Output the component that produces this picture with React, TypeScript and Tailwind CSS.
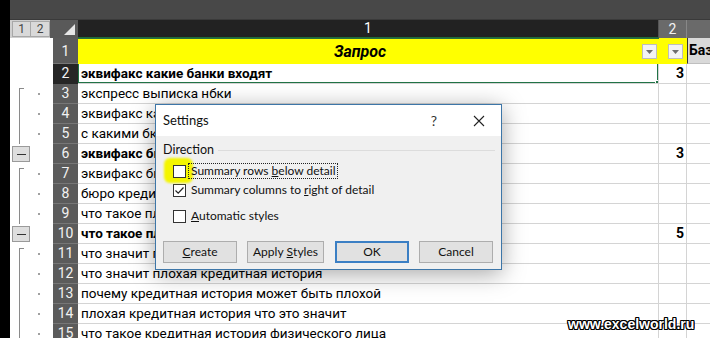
import React from 'react'

type Row = {
  n: number
  text: string
  bold?: boolean
  v?: string
  outline?: 'start' | 'line' | 'minus'
  dot?: boolean
}

const rows: Row[] = [
  { n: 2, text: 'эквифакс какие банки входят', bold: true, v: '3' },
  { n: 3, text: 'экспресс выписка нбки', outline: 'start', dot: true },
  { n: 4, text: 'эквифакс какие банки сотрудничают', outline: 'line', dot: true },
  { n: 5, text: 'с какими бки работают банки', outline: 'line', dot: true },
  { n: 6, text: 'эквифакс бки официальный сайт', bold: true, v: '3', outline: 'minus' },
  { n: 7, text: 'эквифакс бки официальный сайт вход', outline: 'start', dot: true },
  { n: 8, text: 'бюро кредитных историй эквифакс', outline: 'line', dot: true },
  { n: 9, text: 'что такое плохая кредитная история', outline: 'line', dot: true },
  { n: 10, text: 'что такое плохая кредитная история', bold: true, v: '5', outline: 'minus' },
  { n: 11, text: 'что значит плохая кредитная история в банке', outline: 'start', dot: true },
  { n: 12, text: 'что значит плохая кредитная история', outline: 'line', dot: true },
  { n: 13, text: 'почему кредитная история может быть плохой', outline: 'line', dot: true },
  { n: 14, text: 'плохая кредитная история что это значит', outline: 'line', dot: true },
  { n: 15, text: 'что такое кредитная история физического лица', outline: 'line', dot: true },
]

const cellFont = "font-['Roboto','Noto_Sans',sans-serif]"
const uiFont = "font-['Lato','Noto_Sans',sans-serif]"

function Minus() {
  return (
    <div className="ml-[2px] w-[18px] h-[16px] bg-[#dedede] border border-[#9a9a9a] flex items-center justify-center">
      <div className="w-[9px] h-px bg-[#333]" />
    </div>
  )
}

function Outline({ row }: { row: Row }) {
  return (
    <div className="w-[43px] shrink-0 h-full bg-white flex">
      <div className="w-[21px] shrink-0 h-full flex items-stretch">
        {row.outline === 'start' && <div className="ml-[9px] mt-[4px] w-[5px] border-l border-t border-[#8a8a8a]" />}
        {row.outline === 'line' && <div className="ml-[9px] w-[5px] border-l border-[#8a8a8a]" />}
        {row.outline === 'minus' && <div className="flex items-center"><Minus /></div>}
      </div>
      <div className="w-[22px] shrink-0 flex items-center">
        {row.dot && <div className="ml-[7px] w-[2px] h-[2px] bg-[#a0a0a0]" />}
      </div>
    </div>
  )
}

function Check({ checked }: { checked?: boolean }) {
  return (
    <div className="w-[13px] h-[13px] shrink-0 bg-white border border-[#333] flex items-center justify-center">
      {checked && (
        <svg width="11" height="11" viewBox="0 0 11 11">
          <path d="M1.5 5.5 L4.2 8.2 L9.5 2.5" fill="none" stroke="#222" strokeWidth="1.2" />
        </svg>
      )}
    </div>
  )
}

function FilterBtn() {
  return (
    <div className="w-[15px] h-[15px] bg-[#f3f3f3] border border-[#bdbdbd] flex items-center justify-center">
      <svg width="7" height="4" viewBox="0 0 7 4">
        <path d="M0 0 H7 L3.5 4 Z" fill="#6d6d6d" />
      </svg>
    </div>
  )
}

function Btn({ children, w, ml, focus }: { children: React.ReactNode; w: string; ml: string; focus?: boolean }) {
  return (
    <div
      className={
        'h-[22px] shrink-0 flex items-center justify-center bg-[#e1e1e1] text-[12px] text-[#111] ' +
        w + ' ' + ml + ' ' +
        (focus ? 'border-2 border-[#3b7fc4]' : 'border border-[#adadad]')
      }
    >
      {children}
    </div>
  )
}

function Dialog() {
  return (
    <div className={`absolute left-[155px] top-[104px] w-[347px] h-[166px] border border-[#3d76a8] bg-[#f0f0f0] shadow-[0_4px_22px_rgba(0,0,0,0.35)] flex flex-col ${uiFont}`}>
      <div className="h-[31px] shrink-0 bg-white flex items-center text-[13px] text-[#111]">
        <span className="ml-[7px]">Settings</span>
        <span className="ml-auto mr-[36px] text-[14px] text-[#333]">?</span>
        <svg className="mr-[16px]" width="12" height="12" viewBox="0 0 12 12">
          <path d="M1 1 L11 11 M11 1 L1 11" stroke="#222" strokeWidth="1.1" />
        </svg>
      </div>
      <div className="flex-1 flex flex-col text-[12px] text-[#111] pl-[7px]">
        <div className="mt-[6px] h-[16px] flex items-center">
          <span className="text-[12.5px]">Direction</span>
          <div className="flex-1 ml-[4px] mr-[6px] h-px bg-[#dcdcdc]" />
        </div>
        <div className="mt-[4px] h-[18px] flex items-center pl-[10px] relative">
          <div className="absolute left-[1px] top-[-4px] w-[29px] h-[25px] rounded-[6px] bg-[#f4f500] blur-[1px]" />
          <div className="relative"><Check /></div>
          <span className="relative ml-[2px] px-[2px] border border-dotted border-[#222] leading-[14px]">
            Summary rows <u>b</u>elow detail
          </span>
        </div>
        <div className="mt-[1px] h-[18px] flex items-center pl-[10px]">
          <Check checked />
          <span className="ml-[5px]">Summary columns to <u>r</u>ight of detail</span>
        </div>
        <div className="mt-[8px] h-[18px] flex items-center pl-[10px]">
          <Check />
          <span className="ml-[5px]"><u>A</u>utomatic styles</span>
        </div>
        <div className="mt-[16px] flex">
          <Btn w="w-[74px]" ml="ml-0"><u>C</u>reate</Btn>
          <Btn w="w-[77px]" ml="ml-[10px]">Apply <u className="ml-[3px]">S</u>tyles</Btn>
          <Btn w="w-[74px]" ml="ml-[11px]" focus>OK</Btn>
          <Btn w="w-[74px]" ml="ml-[10px]">Cancel</Btn>
        </div>
      </div>
    </div>
  )
}

export default function App() {
  return (
    <div className={`relative w-[710px] h-[338px] overflow-hidden bg-white flex ${cellFont}`}>
      <div className="w-[10px] shrink-0 h-full bg-black" />
      <div className="flex-1 min-w-0 flex flex-col">
        <div className="h-[20px] shrink-0 bg-[#484848] border-b border-[#3a3a3a]" />

        {/* column headers */}
        <div className="h-[18px] shrink-0 flex">
          <div className="w-[43px] shrink-0 bg-[#cfcfcf] flex items-center">
            <div className="ml-[2px] w-[19px] h-[16px] bg-[#d9d9d9] border border-[#a8a8a8] flex items-center justify-center text-[12px] text-[#444]">1</div>
            <div className="w-[19px] h-[16px] bg-[#d9d9d9] border border-[#a8a8a8] border-l-0 flex items-center justify-center text-[12px] text-[#444]">2</div>
            <div className="flex-1 h-full bg-[#595959]" />
          </div>
          <div className="w-[25px] shrink-0 bg-[#595959] flex items-end justify-end pr-[3px] pb-[3px]">
            <svg width="11" height="11" viewBox="0 0 11 11">
              <path d="M11 0 V11 H0 Z" fill="#e6e6e6" />
            </svg>
          </div>
          <div className="w-[581px] shrink-0 bg-[#222] border-r border-[#555] border-b border-b-[#1f6b3a] flex items-center justify-center text-[14px] text-white">1</div>
          <div className="w-[28px] shrink-0 bg-[#6a6a6a] border-r border-[#888] flex items-center justify-center text-[14px] text-[#f2f2f2]">2</div>
          <div className="flex-1 bg-[#6a6a6a]" />
        </div>

        {/* row 1 */}
        <div className="h-[26px] shrink-0 flex">
          <Outline row={{ n: 1, text: '' }} />
          <div className="w-[25px] shrink-0 bg-[#5b5b5b] border-b border-[#777] flex items-end justify-center pb-[1px] text-[14px] text-[#f2f2f2]">1</div>
          <div className="w-[581px] shrink-0 bg-[#ffff00] border-t border-[#2c6e3f] flex items-center relative">
            <span className="flex-1 text-center text-[16px] font-bold italic text-black">Запрос</span>
            <div className="mr-[2px]"><FilterBtn /></div>
          </div>
          <div className="w-[28px] shrink-0 bg-[#ffff00] flex items-center justify-center border-t border-[#ffff00]">
            <div className="ml-[4px]"><FilterBtn /></div>
          </div>
          <div className="flex-1 min-w-0 bg-[#d9d9d9] border-l border-[#333] border-b border-b-[#bfbfbf] flex items-center pl-[1px] text-[14px] font-bold text-black whitespace-nowrap overflow-hidden">
            Баз
          </div>
        </div>

        {rows.map((r) => (
          <div key={r.n} className="h-[20px] shrink-0 flex">
            <Outline row={r} />
            <div
              className={
                'w-[25px] shrink-0 border-b flex items-center justify-center text-[14px] text-[#f2f2f2] ' +
                (r.n === 2 ? 'bg-[#262626] border-[#262626]' : 'bg-[#5b5b5b] border-[#777]')
              }
            >
              {r.n}
            </div>
            <div
              className={
                'w-[581px] shrink-0 border-b border-r border-[#d4d4d4] flex items-center pl-[3px] text-[13.5px] text-black whitespace-nowrap overflow-hidden relative ' +
                (r.bold ? 'font-bold' : '')
              }
            >
              {r.text}
              {r.n === 2 && (
                <div className="absolute -left-px -top-[2px] w-[582px] h-[22px] border-2 border-[#217346]">
                  <div className="absolute -right-[4px] -bottom-[4px] w-[6px] h-[6px] bg-[#217346] border border-white" />
                </div>
              )}
            </div>
            <div className="w-[28px] shrink-0 border-b border-r border-[#d4d4d4] flex items-center justify-end pr-[2px] text-[14px] font-bold text-black">
              {r.v}
            </div>
            <div className="flex-1 border-b border-[#d4d4d4]" />
          </div>
        ))}
      </div>

      <Dialog />

      <div className="absolute left-[568px] top-[314px] text-[14px] font-bold text-white font-['Liberation_Sans',sans-serif] [text-shadow:1px_0_0_#000,-1px_0_0_#000,0_1px_0_#000,0_-1px_0_#000,1px_1px_0_#000,-1px_-1px_0_#000,1px_-1px_0_#000,-1px_1px_0_#000]">
        www.excelworld.ru
      </div>
    </div>
  )
}
